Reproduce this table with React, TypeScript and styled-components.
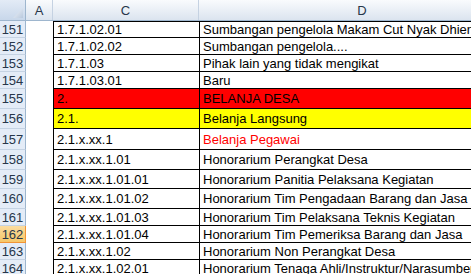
import styled, { createGlobalStyle } from "styled-components";

const GlobalStyle = createGlobalStyle`
  html, body {
    margin: 0;
    padding: 0;
    background: #ffffff;
    overflow: hidden;
  }
`;

const COLS = "26px 27px 146px 327px";

type RowData = {
  num: number;
  code: string;
  name: string;
  height: number;
  bg?: string;
  nameColor?: string;
  active?: boolean;
};

const rows: RowData[] = [
  { num: 151, code: "1.7.1.02.01", name: "Sumbangan pengelola Makam Cut Nyak Dhien", height: 17 },
  { num: 152, code: "1.7.1.02.02", name: "Sumbangan pengelola....", height: 17 },
  { num: 153, code: "1.7.1.03", name: "Pihak lain yang tidak mengikat", height: 17 },
  { num: 154, code: "1.7.1.03.01", name: "Baru", height: 17 },
  { num: 155, code: "2.", name: "BELANJA DESA", height: 20, bg: "#ff0000" },
  { num: 156, code: "2.1.", name: "Belanja Langsung", height: 20, bg: "#ffff00" },
  { num: 157, code: "2.1.x.xx.1", name: "Belanja Pegawai", height: 21, nameColor: "#ff0000" },
  { num: 158, code: "2.1.x.xx.1.01", name: "Honorarium Perangkat Desa", height: 20 },
  { num: 159, code: "2.1.x.xx.1.01.01", name: "Honorarium Panitia Pelaksana Kegiatan", height: 19 },
  { num: 160, code: "2.1.x.xx.1.01.02", name: "Honorarium Tim Pengadaan Barang dan Jasa", height: 20 },
  { num: 161, code: "2.1.x.xx.1.01.03", name: "Honorarium Tim Pelaksana Teknis Kegiatan", height: 17 },
  { num: 162, code: "2.1.x.xx.1.01.04", name: "Honorarium Tim Pemeriksa Barang dan Jasa", height: 17, active: true },
  { num: 163, code: "2.1.x.xx.1.02", name: "Honorarium Non Perangkat Desa", height: 17 },
  { num: 164, code: "2.1.x.xx.1.02.01", name: "Honorarium Tenaga Ahli/Instruktur/Narasumber", height: 17 },
];

const Sheet = styled.div`
  width: 471px;
  height: 274px;
  overflow: hidden;
  font-family: "Liberation Sans", Arial, sans-serif;
  font-size: 13px;
  color: #000000;
`;

const HeaderRow = styled.div`
  display: grid;
  grid-template-columns: ${COLS};
  height: 20px;
  border-bottom: 1px solid #9eb6ce;
`;

const Corner = styled.div`
  position: relative;
  background: linear-gradient(#e3ebf6, #c8d7ea);
  border-right: 1px solid #9eb6ce;
  svg {
    position: absolute;
    right: 2px;
    bottom: 2px;
  }
`;

const ColHead = styled.div`
  display: flex;
  align-items: center;
  justify-content: center;
  background: linear-gradient(#f9fbfd, #dbe4ef);
  border-right: 1px solid #c5d2e2;
  color: #27364a;
  padding-top: 1px;
`;

const Row = styled.div<{ $h: number }>`
  display: grid;
  grid-template-columns: ${COLS};
  height: ${(p) => p.$h}px;
`;

const RowHead = styled.div<{ $active?: boolean }>`
  display: flex;
  align-items: center;
  justify-content: center;
  box-sizing: border-box;
  color: #27364a;
  background: ${(p) => (p.$active ? "linear-gradient(#fbdc9f, #f6c768)" : "#e4ecf7")};
  border-bottom: 1px solid ${(p) => (p.$active ? "#f29536" : "#c5d3e3")};
  border-right: 1px solid ${(p) => (p.$active ? "#f29536" : "#9eb6ce")};
`;

const Blank = styled.div`
  background: #ffffff;
`;

const Cell = styled.div<{ $bg?: string; $color?: string; $top?: boolean }>`
  display: flex;
  align-items: center;
  box-sizing: border-box;
  padding-left: 3px;
  white-space: nowrap;
  overflow: hidden;
  background: ${(p) => p.$bg || "#ffffff"};
  color: ${(p) => p.$color || "#000000"};
  border-left: 1px solid #000000;
  border-bottom: 1px solid #000000;
  border-top: ${(p) => (p.$top ? "1px solid #000000" : "none")};
`;

const CornerMark = () => (
  <svg width="10" height="10" viewBox="0 0 10 10">
    <defs>
      <linearGradient id="cm" x1="0" y1="0" x2="1" y2="1">
        <stop offset="0" stopColor="#f4f7fb" />
        <stop offset="1" stopColor="#b9c9dd" />
      </linearGradient>
    </defs>
    <polygon points="10,0 10,10 0,10" fill="url(#cm)" />
  </svg>
);

export default function App() {
  return (
    <>
      <GlobalStyle />
      <Sheet>
        <HeaderRow>
          <Corner>
            <CornerMark />
          </Corner>
          <ColHead>A</ColHead>
          <ColHead>C</ColHead>
          <ColHead>D</ColHead>
        </HeaderRow>
        {rows.map((r, i) => (
          <Row key={r.num} $h={r.height}>
            <RowHead $active={r.active}>{r.num}</RowHead>
            <Blank />
            <Cell $bg={r.bg} $top={i === 0}>
              {r.code}
            </Cell>
            <Cell $bg={r.bg} $color={r.nameColor} $top={i === 0}>
              {r.name}
            </Cell>
          </Row>
        ))}
      </Sheet>
    </>
  );
}
